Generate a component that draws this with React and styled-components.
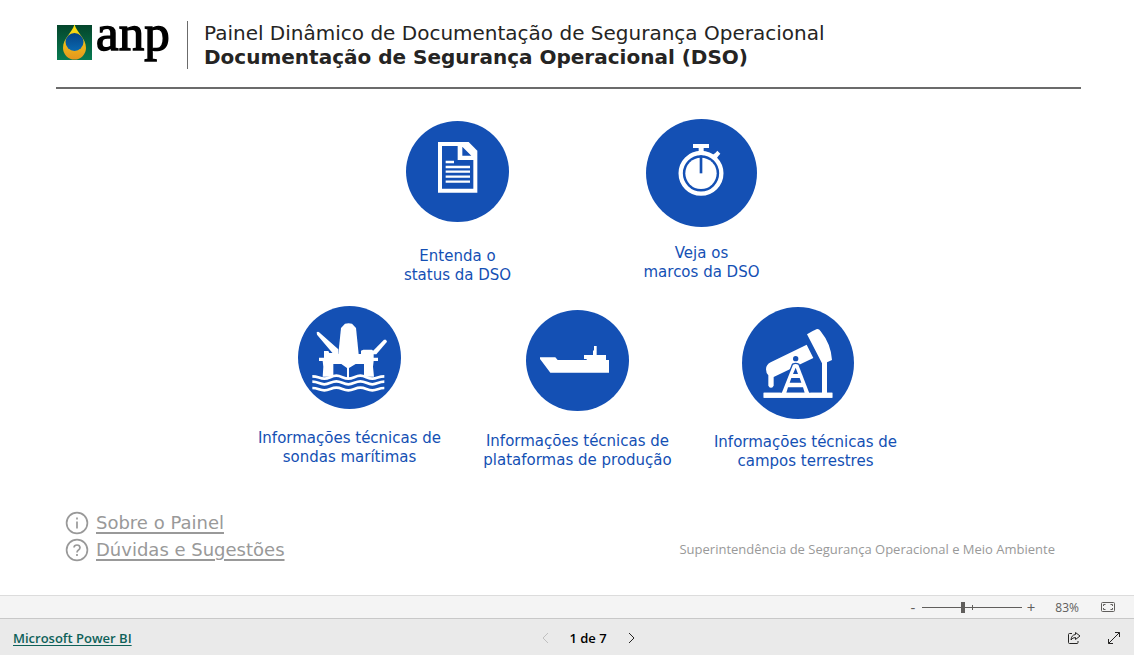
import { useState } from "react";
import styled, { createGlobalStyle } from "styled-components";

const GlobalStyle = createGlobalStyle`
  * {
    box-sizing: border-box;
  }

  body {
    margin: 0;
    background: #ffffff;
    --color-blue: #1450b4;
    --color-text: #252423;
    --color-muted: #999999;
    --font-report: Verdana, "DejaVu Sans", sans-serif;
    --font-ui: "Segoe UI", "Open Sans", sans-serif;
  }

  button {
    border: none;
    background: none;
    padding: 0;
    cursor: pointer;
  }
`;

const Page = styled.div`
  min-height: 100vh;
  display: flex;
  flex-direction: column;
`;

const Report = styled.div`
  flex: 1;
  display: flex;
  flex-direction: column;
  padding: 20px 53px 33px 56px;
`;

const Header = styled.header`
  display: flex;
  align-items: center;
  padding-bottom: 17px;
  border-bottom: 2px solid #6b6b6b;
`;

const Logo = styled.svg`
  width: 115px;
  height: 50px;
  flex-shrink: 0;
  overflow: visible;
`;

const TitleBlock = styled.div`
  margin-left: 16px;
  padding-left: 16px;
  border-left: 1px solid #6b6b6b;
  color: var(--color-text);
  font-family: var(--font-report);
`;

const Title = styled.h1`
  margin: 0;
  font-size: 20px;
  line-height: 24px;
  font-weight: ${(props) => (props.$bold ? 700 : 400)};
`;

const Menu = styled.main`
  flex: 1;
  display: flex;
  flex-direction: column;
  gap: 21px;
  padding: 30px 0 0 18px;
`;

const Row = styled.div`
  display: flex;
  justify-content: center;
  gap: ${(props) => props.$gap}px;
  padding-left: ${(props) => props.$indent || 0}px;
`;

const Tile = styled.button`
  width: 200px;
  display: flex;
  flex-direction: column;
  align-items: center;
  align-self: flex-start;
  gap: ${(props) => props.$gap}px;
  padding-top: ${(props) => props.$top || 0}px;
  color: var(--color-blue);
  font-family: var(--font-report);
  font-size: 15px;
  line-height: 19px;
`;

const TileIcon = styled.svg`
  width: ${(props) => props.$width}px;
  height: ${(props) => props.$height}px;
  margin-right: ${(props) => props.$shift || 0}px;
`;

const BottomRow = styled.div`
  display: flex;
  align-items: flex-end;
  justify-content: space-between;
`;

const Links = styled.nav`
  display: flex;
  flex-direction: column;
  gap: 2px;
  padding-left: 9px;
`;

const HelpLink = styled.a`
  display: flex;
  align-items: center;
  gap: 7px;
  color: var(--color-muted);
  font-family: var(--font-report);
  font-size: 18px;
  line-height: 25px;
  text-underline-offset: 3px;
  text-decoration-thickness: 2px;
`;

const Credit = styled.p`
  margin: 0 26px 3px 0;
  color: var(--color-muted);
  font-family: var(--font-ui);
  font-size: 13px;
  line-height: 20px;
`;

const ZoomBar = styled.div`
  height: 23px;
  display: flex;
  align-items: center;
  justify-content: flex-end;
  padding-right: 19px;
  background: #f4f4f4;
  border-top: 1px solid #dcdcdc;
  color: #605e5c;
  font-family: var(--font-ui);
  font-size: 12px;
`;

const ZoomStep = styled.button`
  width: 18px;
  color: #605e5c;
  font-family: var(--font-ui);
  font-size: 15px;
  line-height: 20px;
`;

const ZoomRange = styled.input`
  appearance: none;
  width: 100px;
  height: 12px;
  margin: 0;
  background:
    linear-gradient(#605e5c, #605e5c) center / 100% 1px no-repeat,
    linear-gradient(#605e5c, #605e5c) center / 1px 5px no-repeat;

  &::-webkit-slider-thumb {
    appearance: none;
    width: 4px;
    height: 11px;
    background: #605e5c;
  }
`;

const ZoomValue = styled.output`
  width: 39px;
  margin-right: 22px;
  text-align: right;
`;

const FitButton = styled.button`
  display: flex;
  color: #605e5c;
`;

const Footer = styled.footer`
  height: 37px;
  display: grid;
  grid-template-columns: 1fr auto 1fr;
  align-items: center;
  padding: 2px 13px 0;
  background: #eaeaea;
  border-top: 1px solid #c8c8c8;
  font-family: var(--font-ui);
  font-size: 13px;
  font-weight: 600;
`;

const BrandLink = styled.a`
  justify-self: start;
  color: #0e6159;
  text-underline-offset: 2px;
`;

const Pager = styled.div`
  display: flex;
  align-items: center;
  gap: 15px;
  padding-left: 42px;
  color: #000000;
`;

const IconButton = styled.button`
  display: flex;
  color: #252423;

  &:disabled {
    color: #c0c0c0;
    cursor: default;
  }
`;

const Actions = styled.div`
  display: flex;
  justify-self: end;
  gap: 26px;
`;

const TOTAL_PAGES = 7;

function AnpLogo() {
  return (
    <Logo viewBox="0 0 115 50" role="img" aria-label="anp">
      <defs>
        <linearGradient id="logoGreen" x1="0" y1="0" x2="0" y2="1">
          <stop offset="0" stopColor="#04452b" />
          <stop offset="1" stopColor="#077b52" />
        </linearGradient>
        <linearGradient id="logoDrop" x1="0" y1="0" x2="0" y2="1">
          <stop offset="0" stopColor="#ffe70f" />
          <stop offset="1" stopColor="#e3951f" />
        </linearGradient>
        <linearGradient id="logoBlue" x1="0" y1="0" x2="0" y2="1">
          <stop offset="0" stopColor="#064384" />
          <stop offset="1" stopColor="#0968b0" />
        </linearGradient>
      </defs>
      <rect x="1" y="5" width="35" height="35" fill="url(#logoGreen)" />
      <path d="M18.5 4.5 C21 13 30 18 30 28 A11.5 11.5 0 0 1 7 28 C7 18 16 13 18.5 4.5 Z" fill="url(#logoDrop)" />
      <circle cx="18.5" cy="22" r="9" fill="url(#logoBlue)" />
      <text
        x="40"
        y="30"
        fontFamily="'Liberation Serif', serif"
        fontSize="51"
        fill="#000000"
        stroke="#000000"
        strokeWidth="1.4"
      >
        anp
      </text>
    </Logo>
  );
}

function DocumentIcon() {
  return (
    <TileIcon $width={103} $height={101} viewBox="18 33 309 303" aria-hidden="true">
      <ellipse cx="172.5" cy="184.5" rx="154.5" ry="151.5" fill="#1450b4" />
      <path fill="#ffffff" d="M114 96 H206 L232 122 V248 H114 Z" />
      <path fill="#1450b4" d="M126 108 H173 V150 H220 V236 H126 Z M187 110 L214 137 H187 Z" />
      <path
        stroke="#ffffff"
        strokeWidth="7"
        d="M137 156 H162 M137 171 H210 M137 185 H210 M137 200 H210 M137 215 H210"
      />
    </TileIcon>
  );
}

function StopwatchIcon() {
  return (
    <TileIcon $width={111} $height={108} viewBox="18 27 333 324" aria-hidden="true">
      <ellipse cx="184.5" cy="189" rx="166.5" ry="162" fill="#1450b4" />
      <circle cx="183" cy="190" r="61" fill="none" stroke="#ffffff" strokeWidth="13" />
      <circle cx="183" cy="190" r="47" fill="#ffffff" />
      <path fill="#ffffff" d="M159 102 H207 V114 H191 V126 H176 V114 H159 Z" />
      <path fill="#ffffff" d="M214 137 L226 129 L232 122 L241 131 L235 138 L227 149 Z" />
      <path stroke="#1450b4" strokeWidth="8" d="M183 136 V190" />
    </TileIcon>
  );
}

function RigIcon() {
  return (
    <TileIcon $width={103} $height={103} viewBox="144 18 309 309" aria-hidden="true">
      <circle cx="298.5" cy="172.5" r="154.5" fill="#1450b4" />
      <g fill="#ffffff">
        <path d="M265 162 L273 84 L285 71 Q296 68 306 71 L318 84 L326 162 Z" />
        <path d="M200 97 Q204 93 209 98 L265 148 V162 H250 L201 104 Z" />
        <path d="M408 119 L411 125 L379 163 H368 V154 L402 119 Z" />
        <path d="M222 153 H235 L238 159 H250 L262 162 H333 V152 L340 149 H366 L371 154 V173 H384 V183 H371 L369 200 L372 230 H342 V192 H317 L297 204 V236 H291 V204 L274 192 H250 V230 H218 L220 200 L218 183 H207 V173 H222 Z" />
      </g>
      <g fill="none" stroke="#ffffff" strokeWidth="8">
        <path d="M187 229 C205 229 208 236 223 236 S244 227 259 227 S280 236 295 236 S316 227 331 227 S352 236 367 236 S385 229 403 229" />
        <path d="M187 245 C205 245 208 253 223 253 S244 244 259 244 S280 253 295 253 S316 244 331 244 S352 253 367 253 S385 245 403 245" />
        <path d="M187 264 C205 264 208 271 223 271 S244 263 259 263 S280 271 295 271 S316 263 331 263 S352 271 367 271 S385 264 403 264" />
      </g>
    </TileIcon>
  );
}

function ShipIcon() {
  return (
    <TileIcon $width={103} $height={101} viewBox="162 30 309 303" aria-hidden="true">
      <ellipse cx="316.5" cy="181.5" rx="154.5" ry="151.5" fill="#1450b4" />
      <path
        fill="#ffffff"
        d="M204 172 H250 L257 180 H344 V177 H336 V165 H363 V153 L366 150 V138 H374 V165 H402 V180 H411 V218 H235 L204 177 Z"
      />
    </TileIcon>
  );
}

function PumpIcon() {
  return (
    <TileIcon $width={112} $height={112} $shift={15} viewBox="126 21 336 336" aria-hidden="true">
      <circle cx="294" cy="189" r="168" fill="#1450b4" />
      <g fill="#ffffff">
        <path d="M321 103 Q336 93 351 87 Q357 86 362 94 Q393 132 396 180 L381 187 V278 H397 V293 H191 V278 H366 V190 Z" />
        <path d="M320 134 L340 174 L221 231 V257 Q213 270 205 257 V226 Q198 219 198 208 Q198 194 212 187 Z" />
        <path
          stroke="#1450b4"
          strokeWidth="8"
          paintOrder="stroke"
          d="M279 194 Q287 190 295 194 L328 280 H245 Z"
        />
      </g>
      <path fill="#1450b4" d="M287 203 L294 222 H279 Z M274 234 H299 L304 248 H269 Z M264 262 H309 L314 278 H259 Z" />
      <path fill="#ffffff" d="M191 278 H397 V293 H191 Z" />
      <circle cx="287" cy="176" r="8" fill="#1450b4" />
    </TileIcon>
  );
}

function HelpIcon({ question }) {
  return (
    <svg width="24" height="24" viewBox="0 0 24 24" fill="none" stroke="#999999" strokeWidth="1.7" aria-hidden="true">
      <circle cx="12" cy="12" r="10.4" />
      {question ? (
        <path d="M9 9.5 Q9.2 7 12 7 T15 9.6 Q15 11 13.5 12 T12 14.5 M12 16 V18" />
      ) : (
        <path d="M12 6.5 V8.5 M12 10.5 V17.5" />
      )}
    </svg>
  );
}

export default function App() {
  const [page, setPage] = useState(1);
  const [position, setPosition] = useState(41);

  // middle of the slider is 100%
  const zoom = position <= 50 ? Math.floor(10 + position * 1.8) : 100 + (position - 50) * 6;

  return (
    <Page>
      <GlobalStyle />
      <Report>
        <Header>
          <AnpLogo />
          <TitleBlock>
            <Title>Painel Dinâmico de Documentação de Segurança Operacional</Title>
            <Title as="h2" $bold>
              Documentação de Segurança Operacional (DSO)
            </Title>
          </TitleBlock>
        </Header>

        <Menu>
          <Row $gap={44} $indent={4}>
            <Tile $top={2} $gap={25}>
              <DocumentIcon />
              <span>
                Entenda o<br />
                status da DSO
              </span>
            </Tile>
            <Tile $gap={17}>
              <StopwatchIcon />
              <span>
                Veja os
                <br />
                marcos da DSO
              </span>
            </Tile>
          </Row>
          <Row $gap={28}>
            <Tile $gap={20}>
              <RigIcon />
              <span>
                Informações técnicas de
                <br />
                sondas marítimas
              </span>
            </Tile>
            <Tile $top={4} $gap={21}>
              <ShipIcon />
              <span>
                Informações técnicas de
                <br />
                plataformas de produção
              </span>
            </Tile>
            <Tile $top={1} $gap={14}>
              <PumpIcon />
              <span>
                Informações técnicas de
                <br />
                campos terrestres
              </span>
            </Tile>
          </Row>
        </Menu>

        <BottomRow>
          <Links>
            <HelpLink href="#sobre">
              <HelpIcon />
              Sobre o Painel
            </HelpLink>
            <HelpLink href="#duvidas">
              <HelpIcon question />
              Dúvidas e Sugestões
            </HelpLink>
          </Links>
          <Credit>Superintendência de Segurança Operacional e Meio Ambiente</Credit>
        </BottomRow>
      </Report>

      <ZoomBar>
        <ZoomStep aria-label="Reduzir" onClick={() => setPosition(Math.max(0, position - 5))}>
          -
        </ZoomStep>
        <ZoomRange
          type="range"
          min="0"
          max="100"
          aria-label="Zoom"
          value={position}
          onChange={(e) => setPosition(Number(e.target.value))}
        />
        <ZoomStep aria-label="Ampliar" onClick={() => setPosition(Math.min(100, position + 5))}>
          +
        </ZoomStep>
        <ZoomValue>{zoom}%</ZoomValue>
        <FitButton aria-label="Ajustar à página" onClick={() => setPosition(41)}>
          <svg width="14" height="10" viewBox="0 0 14 10" fill="none" stroke="currentColor">
            <rect x="0.5" y="0.5" width="13" height="9" rx="1" />
            <path d="M4.5 2.5 H2.5 V4 M2.5 6 V7.5 H4.5 M9.5 2.5 H11.5 V4 M11.5 6 V7.5 H9.5" />
          </svg>
        </FitButton>
      </ZoomBar>

      <Footer>
        <BrandLink href="#powerbi">Microsoft Power BI</BrandLink>
        <Pager>
          <IconButton aria-label="Página anterior" disabled={page === 1} onClick={() => setPage(page - 1)}>
            <svg width="16" height="12" viewBox="0 0 16 12" fill="none" stroke="currentColor">
              <path d="M10 1 L5 6 L10 11" />
            </svg>
          </IconButton>
          <span>
            {page} de {TOTAL_PAGES}
          </span>
          <IconButton aria-label="Próxima página" disabled={page === TOTAL_PAGES} onClick={() => setPage(page + 1)}>
            <svg width="16" height="12" viewBox="0 0 16 12" fill="none" stroke="currentColor">
              <path d="M7 1 L12 6 L7 11" />
            </svg>
          </IconButton>
        </Pager>
        <Actions>
          <IconButton aria-label="Compartilhar">
            <svg width="14" height="14" viewBox="0 0 14 14" fill="none" stroke="currentColor" strokeLinejoin="round">
              <path d="M5 2.5 H2.5 Q1.5 2.5 1.5 3.5 V11.5 Q1.5 12.5 2.5 12.5 H10 Q11 12.5 11 11.5 V10" />
              <path d="M8.5 1.5 L13 5 L8.5 8.5 V6.5 Q5.5 6.5 4 9 Q4.3 4 8.5 3.5 Z" />
            </svg>
          </IconButton>
          <IconButton aria-label="Tela cheia">
            <svg width="14" height="14" viewBox="0 0 14 14" fill="none" stroke="currentColor">
              <path d="M1.5 12.5 L12.5 1.5 M8 1.5 H12.5 V6 M1.5 8 V12.5 H6" />
            </svg>
          </IconButton>
        </Actions>
      </Footer>
    </Page>
  );
}
